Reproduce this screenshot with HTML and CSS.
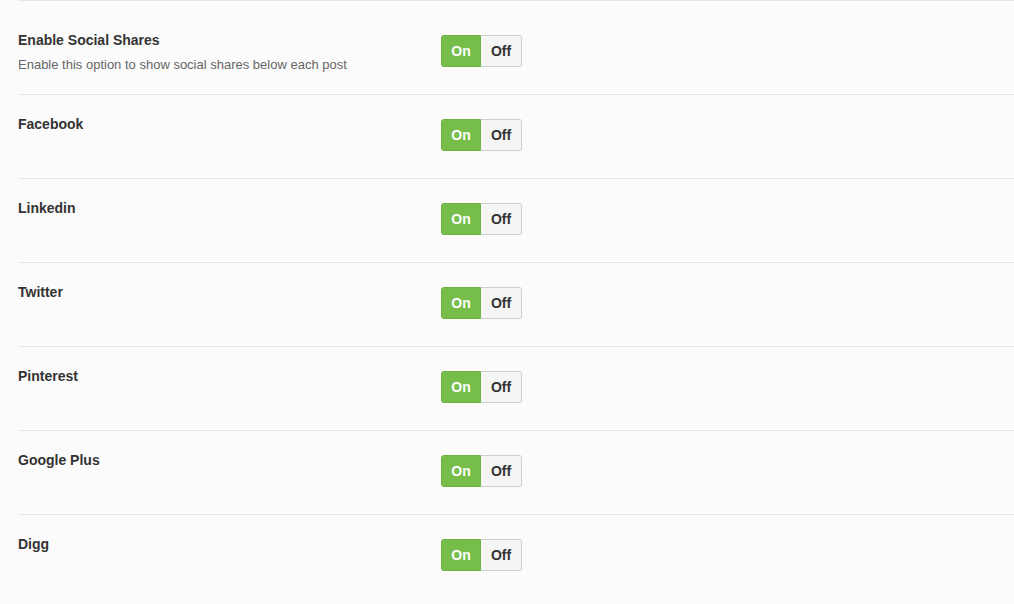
FILE: index.html
```html
<!DOCTYPE html>
<html lang="en">
<head>
  <meta charset="UTF-8" />
  <title>Social Shares</title>
  <link rel="stylesheet" href="styles.css">
</head>
<body>

  <div class="options">

    <!-- MAIN SWITCH -->
    <div class="row row-first">
      <div class="label">
        <div class="title">Enable Social Shares</div>
        <div class="desc">Enable this option to show social shares below each post</div>
      </div>
      <div class="toggle"><span class="on">On</span><span class="off">Off</span></div>
    </div>

    <!-- NETWORKS -->
    <div class="row">
      <div class="label"><div class="title">Facebook</div></div>
      <div class="toggle"><span class="on">On</span><span class="off">Off</span></div>
    </div>
    <div class="row">
      <div class="label"><div class="title">Linkedin</div></div>
      <div class="toggle"><span class="on">On</span><span class="off">Off</span></div>
    </div>
    <div class="row">
      <div class="label"><div class="title">Twitter</div></div>
      <div class="toggle"><span class="on">On</span><span class="off">Off</span></div>
    </div>
    <div class="row">
      <div class="label"><div class="title">Pinterest</div></div>
      <div class="toggle"><span class="on">On</span><span class="off">Off</span></div>
    </div>
    <div class="row">
      <div class="label"><div class="title">Google Plus</div></div>
      <div class="toggle"><span class="on">On</span><span class="off">Off</span></div>
    </div>
    <div class="row">
      <div class="label"><div class="title">Digg</div></div>
      <div class="toggle"><span class="on">On</span><span class="off">Off</span></div>
    </div>

  </div>

</body>
</html>
```

FILE: styles.css
```css
body {
  margin: 0;
  background: #fbfbfb;
  font-family: 'Liberation Sans', Arial, sans-serif;
  color: #333;
}
.options {
  margin-left: 18px;
}
.row {
  display: flex;
  align-items: flex-start;
  box-sizing: border-box;
  height: 84px;
  padding-top: 20px;
  border-top: 1px solid #e6e6e6;
}
.row-first {
  height: 94px;
  padding-top: 30px;
}
.label {
  width: 423px;
}
.title {
  font-size: 14px;
  font-weight: bold;
  line-height: 18px;
  color: #333;
}
.desc {
  margin-top: 7px;
  font-size: 13px;
  line-height: 18px;
  color: #666;
}
.toggle {
  display: flex;
  margin-top: 4px;
  height: 32px;
  font-size: 14px;
  font-weight: bold;
  line-height: 30px;
}
.on {
  width: 40px;
  text-align: center;
  background: #77bd4a;
  color: #fff;
  border: 1px solid #6eb442;
  border-radius: 3px 0 0 3px;
  box-sizing: border-box;
}
.off {
  width: 41px;
  text-align: center;
  background: #f5f5f5;
  color: #333;
  border: 1px solid #cfcfcf;
  border-left: none;
  border-radius: 0 3px 3px 0;
  box-sizing: border-box;
}
```
